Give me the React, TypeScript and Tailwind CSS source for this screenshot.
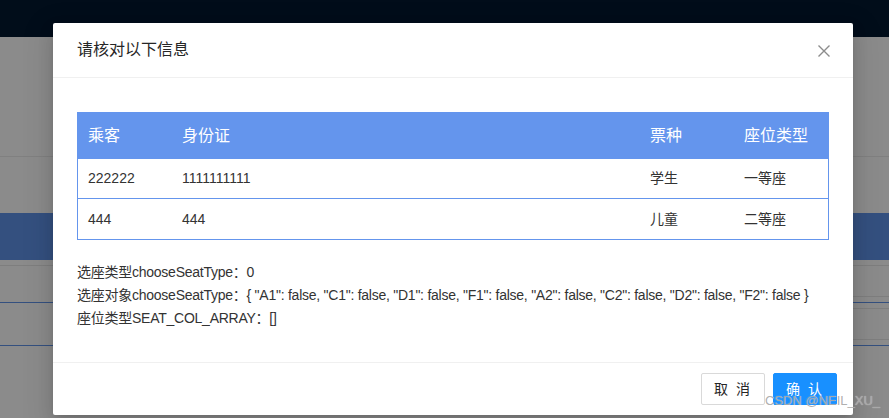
import React from "react";

const font = { fontFamily: '"Liberation Sans", "Noto Sans CJK SC", sans-serif' };

const rows = [
  { name: "222222", id: "1111111111", type: "学生", seat: "一等座" },
  { name: "444", id: "444", type: "儿童", seat: "二等座" },
];

export default function App() {
  return (
    <div className="relative w-[889px] h-[418px] overflow-hidden bg-[#8b8b8b]" style={font}>
      {/* masked page behind */}
      <div className="flex flex-col">
        <div className="h-[37px] bg-[#010d1a]" />
        <div className="h-[120px] border-b border-[#808080]" />
        <div className="h-[56px]" />
        <div className="h-[47px] bg-[#34507f]" />
        <div className="h-[5px]" />
        <div className="h-px bg-[#7e7e7e]" />
        <div className="h-[30px]" />
        <div className="h-px ml-[700px] bg-[#7e7e7e]" />
        <div className="h-[5px]" />
        <div className="h-px bg-[#34507f]" />
        <div className="h-[5px]" />
        <div className="h-px ml-[700px] bg-[#7e7e7e]" />
        <div className="h-[30px]" />
        <div className="h-px ml-[700px] bg-[#7e7e7e]" />
        <div className="h-[5px]" />
        <div className="h-px bg-[#34507f]" />
      </div>

      {/* modal */}
      <div className="absolute left-[53px] top-[23px] w-[800px] bg-white rounded-[2px] shadow-[0_6px_16px_rgba(0,0,0,0.12),0_3px_6px_-4px_rgba(0,0,0,0.16),0_9px_28px_8px_rgba(0,0,0,0.08)] flex flex-col">
        <div className="h-[55px] border-b border-[#f0f0f0] flex items-center justify-between pl-6 pr-[22px]">
          <span className="text-[16px] text-[#262626] leading-[22px]">请核对以下信息</span>
          <svg width="14" height="14" viewBox="0 0 14 14" className="mt-[1px]">
            <path d="M1.5 1.5 L12.5 12.5 M12.5 1.5 L1.5 12.5" stroke="#8c8c8c" strokeWidth="1.4" fill="none" />
          </svg>
        </div>

        <div className="px-6 pt-[34px] pb-[32px]">
          <div className="border border-[#6495ed] flex flex-col">
            <div className="h-[46px] bg-[#6495ed] flex items-center text-white text-[16px]">
              <div className="w-[94px] pl-[10px]">乘客</div>
              <div className="w-[468px] pl-[10px]">身份证</div>
              <div className="w-[94px] pl-[10px]">票种</div>
              <div className="flex-1 pl-[10px]">座位类型</div>
            </div>
            {rows.map((r, i) => (
              <div
                key={i}
                className={
                  i === 0
                    ? "h-[40px] flex items-center text-[14px] text-[#333] border-b border-[#6495ed]"
                    : "h-[40px] flex items-center text-[14px] text-[#333]"
                }
              >
                <div className="w-[94px] pl-[10px]">{r.name}</div>
                <div className="w-[468px] pl-[10px]">{r.id}</div>
                <div className="w-[94px] pl-[10px]">{r.type}</div>
                <div className="flex-1 pl-[10px]">{r.seat}</div>
              </div>
            ))}
          </div>

          <div className="mt-[21px] text-[14px] leading-[23px] text-[#333] whitespace-nowrap tracking-[-0.25px]">
            <div>选座类型chooseSeatType：0</div>
            <div>
              选座对象chooseSeatType：{'{ "A1": false, "C1": false, "D1": false, "F1": false, "A2": false, "C2": false, "D2": false, "F2": false }'}
            </div>
            <div>座位类型SEAT_COL_ARRAY：[]</div>
          </div>
        </div>

        <div className="border-t border-[#f0f0f0] px-4 py-[10px] flex justify-end gap-2">
          <button className="h-8 w-16 border border-[#d9d9d9] rounded-[2px] bg-white text-[14px] text-[#262626] tracking-[2px]">
            取 消
          </button>
          <button className="h-8 w-16 border border-[#1890ff] rounded-[2px] bg-[#1890ff] text-[14px] text-white tracking-[2px]">
            确 认
          </button>
        </div>
      </div>

      {/* watermark */}
      <div
        className="absolute left-[765px] top-[393px] text-[13px] leading-[16px] whitespace-nowrap text-[rgba(165,165,165,0.9)]"
        style={{ fontFamily: '"Liberation Sans", Arial, sans-serif', textShadow: "0 0 1px rgba(255,255,255,0.6)" }}
      >
        CSDN @NEIL_XU_
      </div>
    </div>
  );
}
